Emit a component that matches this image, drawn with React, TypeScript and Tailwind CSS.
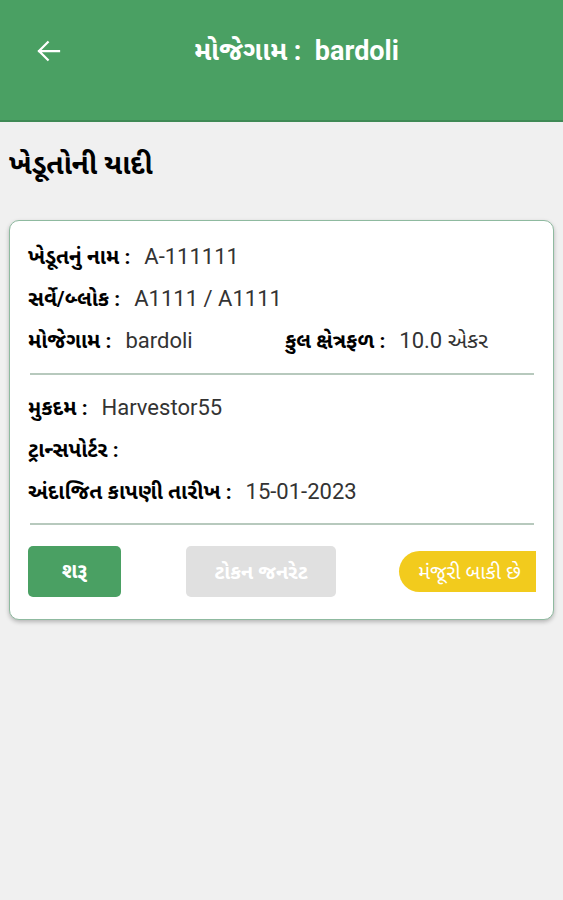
import React from 'react';

const font = { fontFamily: 'Roboto, "Noto Sans Gujarati", "Noto Sans", sans-serif' };

const Row: React.FC<{ label: string; value?: string; className?: string }> = ({ label, value, className }) => (
  <div className={`flex items-baseline h-[28px] leading-[28px] ${className ?? ''}`}>
    <span className="text-[21px] font-bold text-black">{label} :</span>
    {value && <span className="ml-[14px] text-[22px] text-[#333]">{value}</span>}
  </div>
);

export default function App() {
  return (
    <div className="w-[563px] h-[900px] bg-[#f0f0f0] overflow-hidden" style={font}>
      {/* Header */}
      <div className="h-[122px] bg-[#4aa063] border-b-2 border-[#3f8a55]">
        <div className="flex items-center h-[102px] px-[34px]">
          <svg width="30" height="30" viewBox="0 0 24 24" fill="none" stroke="white" strokeWidth="1.8" strokeLinecap="square">
            <path d="M20 12H4M11 5l-7 7 7 7" />
          </svg>
          <div className="flex-1 text-center text-white font-bold text-[27px]">
            મોજેગામ :&nbsp; bardoli
          </div>
        </div>
      </div>

      <div className="px-[9px] pt-[26px]">
        <h1 className="text-[28px] font-bold text-black leading-[34px]">ખેડૂતોની યાદી</h1>

        <div className="mt-[38px] bg-white rounded-[10px] border border-[#8fbaa0] shadow-[0_2px_4px_rgba(0,0,0,0.25)] pl-[18px] pr-[17px] pt-[22px] pb-[22px]">
          <div className="flex flex-col gap-[14px]">
            <Row label="ખેડૂતનું નામ" value="A-111111" />
            <Row label="સર્વે/બ્લોક" value="A1111 / A1111" />
            <div className="flex">
              <Row label="મોજેગામ" value="bardoli" className="w-[257px]" />
              <Row label="કુલ ક્ષેત્રફળ" value="10.0 એકર" />
            </div>
          </div>
          <div className="h-[2px] bg-[#b7c9bd] mt-[18px] ml-[2px] mr-[2px]" />
          <div className="flex flex-col gap-[14px] mt-[19px]">
            <Row label="મુકદમ" value="Harvestor55" />
            <Row label="ટ્રાન્સપોર્ટર" />
            <Row label="અંદાજિત કાપણી તારીખ" value="15-01-2023" />
          </div>
          <div className="h-[2px] bg-[#b7c9bd] mt-[17px] ml-[2px] mr-[2px]" />
          <div className="flex items-center mt-[21px]">
            <button className="w-[93px] h-[51px] rounded-[5px] bg-[#4aa063] text-white font-bold text-[21px]">શરૂ</button>
            <button className="ml-[65px] w-[150px] h-[51px] rounded-[5px] bg-[#e0e0e0] text-white font-bold text-[20px]">ટોકન જનરેટ</button>
            <div className="ml-auto w-[137px] h-[41px] rounded-l-full bg-[#f2cb1d] text-white text-[20px] flex items-center justify-center pl-[4px]">
              મંજૂરી બાકી છે
            </div>
          </div>
        </div>
      </div>
    </div>
  );
}
